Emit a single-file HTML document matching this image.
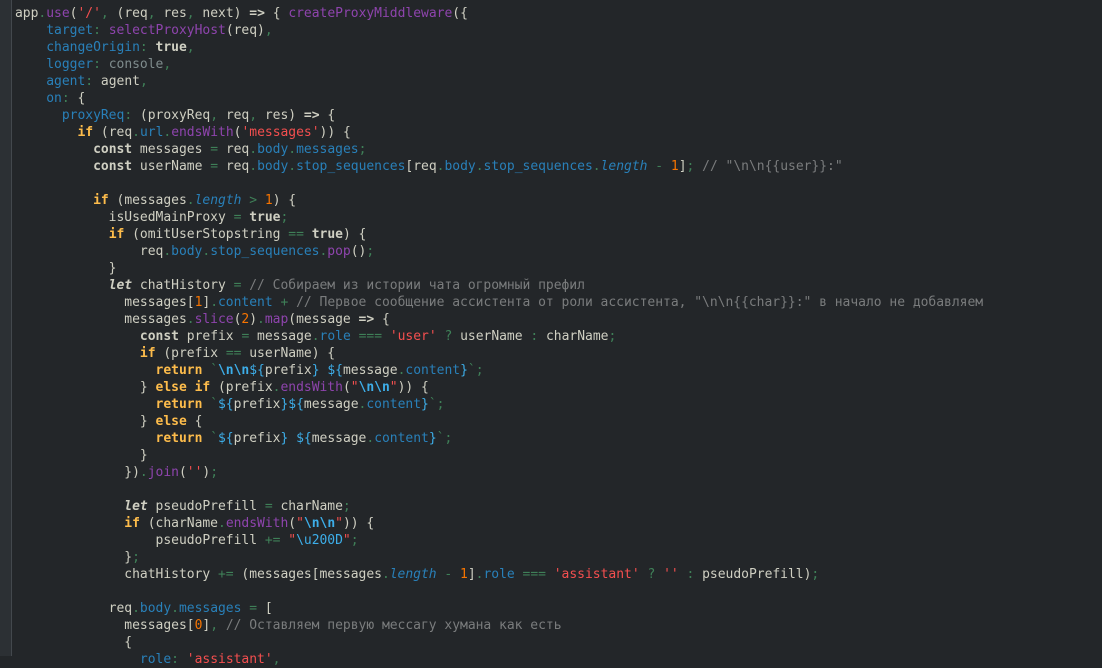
<!DOCTYPE html>
<html><head><meta charset="utf-8"><style>
html,body{margin:0;padding:0;background:#232629;width:1102px;height:656px;overflow:hidden}
.g{position:absolute;left:0;top:0;width:11px;height:656px;background:#2c3034;border-right:1px solid #43484d}
pre{position:absolute;left:15px;top:5px;margin:0;font-family:"DejaVu Sans Mono","Liberation Mono","Noto Sans CJK SC",monospace;font-size:13px;line-height:17px;letter-spacing:-0.02px;color:#cfcfc2;white-space:pre}
.k{font-weight:bold}
.c{color:#fdbc4b;font-weight:bold}
.f{color:#8e44ad}
.p{color:#2980b9}
.i{color:#2980b9;font-style:italic}
.o{color:#3f8058}
.s{color:#f44f4f}
.n{color:#f67400}
.m{color:#7a7c7d}
.x{color:#3daee9;font-weight:bold}
.t{color:#3daee9}
.b{color:#7f8c8d}
</style></head><body>
<div class="g"></div>
<pre>app<span class="o">.</span><span class="f">use</span>(<span class="s">'/'</span><span class="o">,</span> (req<span class="o">,</span> res<span class="o">,</span> next) <span class="k">=&gt;</span> { <span class="f">createProxyMiddleware</span>({
    <span class="p">target</span><span class="o">:</span> <span class="f">selectProxyHost</span>(req)<span class="o">,</span>
    <span class="p">changeOrigin</span><span class="o">:</span> <span class="k">true</span><span class="o">,</span>
    <span class="p">logger</span><span class="o">:</span> <span class="b">console</span><span class="o">,</span>
    <span class="p">agent</span><span class="o">:</span> agent<span class="o">,</span>
    <span class="p">on</span><span class="o">:</span> {
      <span class="p">proxyReq</span><span class="o">:</span> (proxyReq<span class="o">,</span> req<span class="o">,</span> res) <span class="k">=&gt;</span> {
        <span class="c">if</span> (req<span class="o">.</span><span class="p">url</span><span class="o">.</span><span class="f">endsWith</span>(<span class="s">'messages'</span>)) {
          <span class="k">const</span> messages <span class="o">=</span> req<span class="o">.</span><span class="p">body</span><span class="o">.</span><span class="p">messages</span><span class="o">;</span>
          <span class="k">const</span> userName <span class="o">=</span> req<span class="o">.</span><span class="p">body</span><span class="o">.</span><span class="p">stop_sequences</span>[req<span class="o">.</span><span class="p">body</span><span class="o">.</span><span class="p">stop_sequences</span><span class="o">.</span><span class="i">length</span> <span class="o">-</span> <span class="n">1</span>]<span class="o">;</span> <span class="m">// "\n\n{{user}}:"</span>

          <span class="c">if</span> (messages<span class="o">.</span><span class="i">length</span> <span class="o">&gt;</span> <span class="n">1</span>) {
            isUsedMainProxy <span class="o">=</span> <span class="k">true</span><span class="o">;</span>
            <span class="c">if</span> (omitUserStopstring <span class="o">==</span> <span class="k">true</span>) {
                req<span class="o">.</span><span class="p">body</span><span class="o">.</span><span class="p">stop_sequences</span><span class="o">.</span><span class="f">pop</span>()<span class="o">;</span>
            }
            <span class="k"><i>let</i></span> chatHistory <span class="o">=</span> <span class="m">// Собираем из истории чата огромный префил</span>
              messages[<span class="n">1</span>]<span class="o">.</span><span class="p">content</span> <span class="o">+</span> <span class="m">// Первое сообщение ассистента от роли ассистента, "\n\n{{char}}:" в начало не добавляем</span>
              messages<span class="o">.</span><span class="f">slice</span>(<span class="n">2</span>)<span class="o">.</span><span class="f">map</span>(message <span class="k">=&gt;</span> {
                <span class="k">const</span> prefix <span class="o">=</span> message<span class="o">.</span><span class="p">role</span> <span class="o">===</span> <span class="s">'user'</span> <span class="o">?</span> userName <span class="o">:</span> charName<span class="o">;</span>
                <span class="c">if</span> (prefix <span class="o">==</span> userName) {
                  <span class="c">return</span> <span class="o">`</span><span class="x">\n\n</span><span class="t">${</span>prefix<span class="t">}</span> <span class="t">${</span>message<span class="o">.</span><span class="p">content</span><span class="t">}</span><span class="o">`;</span>
                } <span class="c">else if</span> (prefix<span class="o">.</span><span class="f">endsWith</span>(<span class="s">"</span><span class="x">\n\n</span><span class="s">"</span>)) {
                  <span class="c">return</span> <span class="o">`</span><span class="t">${</span>prefix<span class="t">}${</span>message<span class="o">.</span><span class="p">content</span><span class="t">}</span><span class="o">`;</span>
                } <span class="c">else</span> {
                  <span class="c">return</span> <span class="o">`</span><span class="t">${</span>prefix<span class="t">}</span> <span class="t">${</span>message<span class="o">.</span><span class="p">content</span><span class="t">}</span><span class="o">`;</span>
                }
              })<span class="o">.</span><span class="f">join</span>(<span class="s">''</span>)<span class="o">;</span>

              <span class="k"><i>let</i></span> pseudoPrefill <span class="o">=</span> charName<span class="o">;</span>
              <span class="c">if</span> (charName<span class="o">.</span><span class="f">endsWith</span>(<span class="s">"</span><span class="x">\n\n</span><span class="s">"</span>)) {
                  pseudoPrefill <span class="o">+=</span> <span class="s">"</span><span class="t">\u200D</span><span class="s">"</span><span class="o">;</span>
              }<span class="o">;</span>
              chatHistory <span class="o">+=</span> (messages[messages<span class="o">.</span><span class="i">length</span> <span class="o">-</span> <span class="n">1</span>]<span class="o">.</span><span class="p">role</span> <span class="o">===</span> <span class="s">'assistant'</span> <span class="o">?</span> <span class="s">''</span> <span class="o">:</span> pseudoPrefill)<span class="o">;</span>

            req<span class="o">.</span><span class="p">body</span><span class="o">.</span><span class="p">messages</span> <span class="o">=</span> [
              messages[<span class="n">0</span>]<span class="o">,</span> <span class="m">// Оставляем первую мессагу хумана как есть</span>
              {
                <span class="p">role</span><span class="o">:</span> <span class="s">'assistant'</span><span class="o">,</span>
</pre>
</body></html>
